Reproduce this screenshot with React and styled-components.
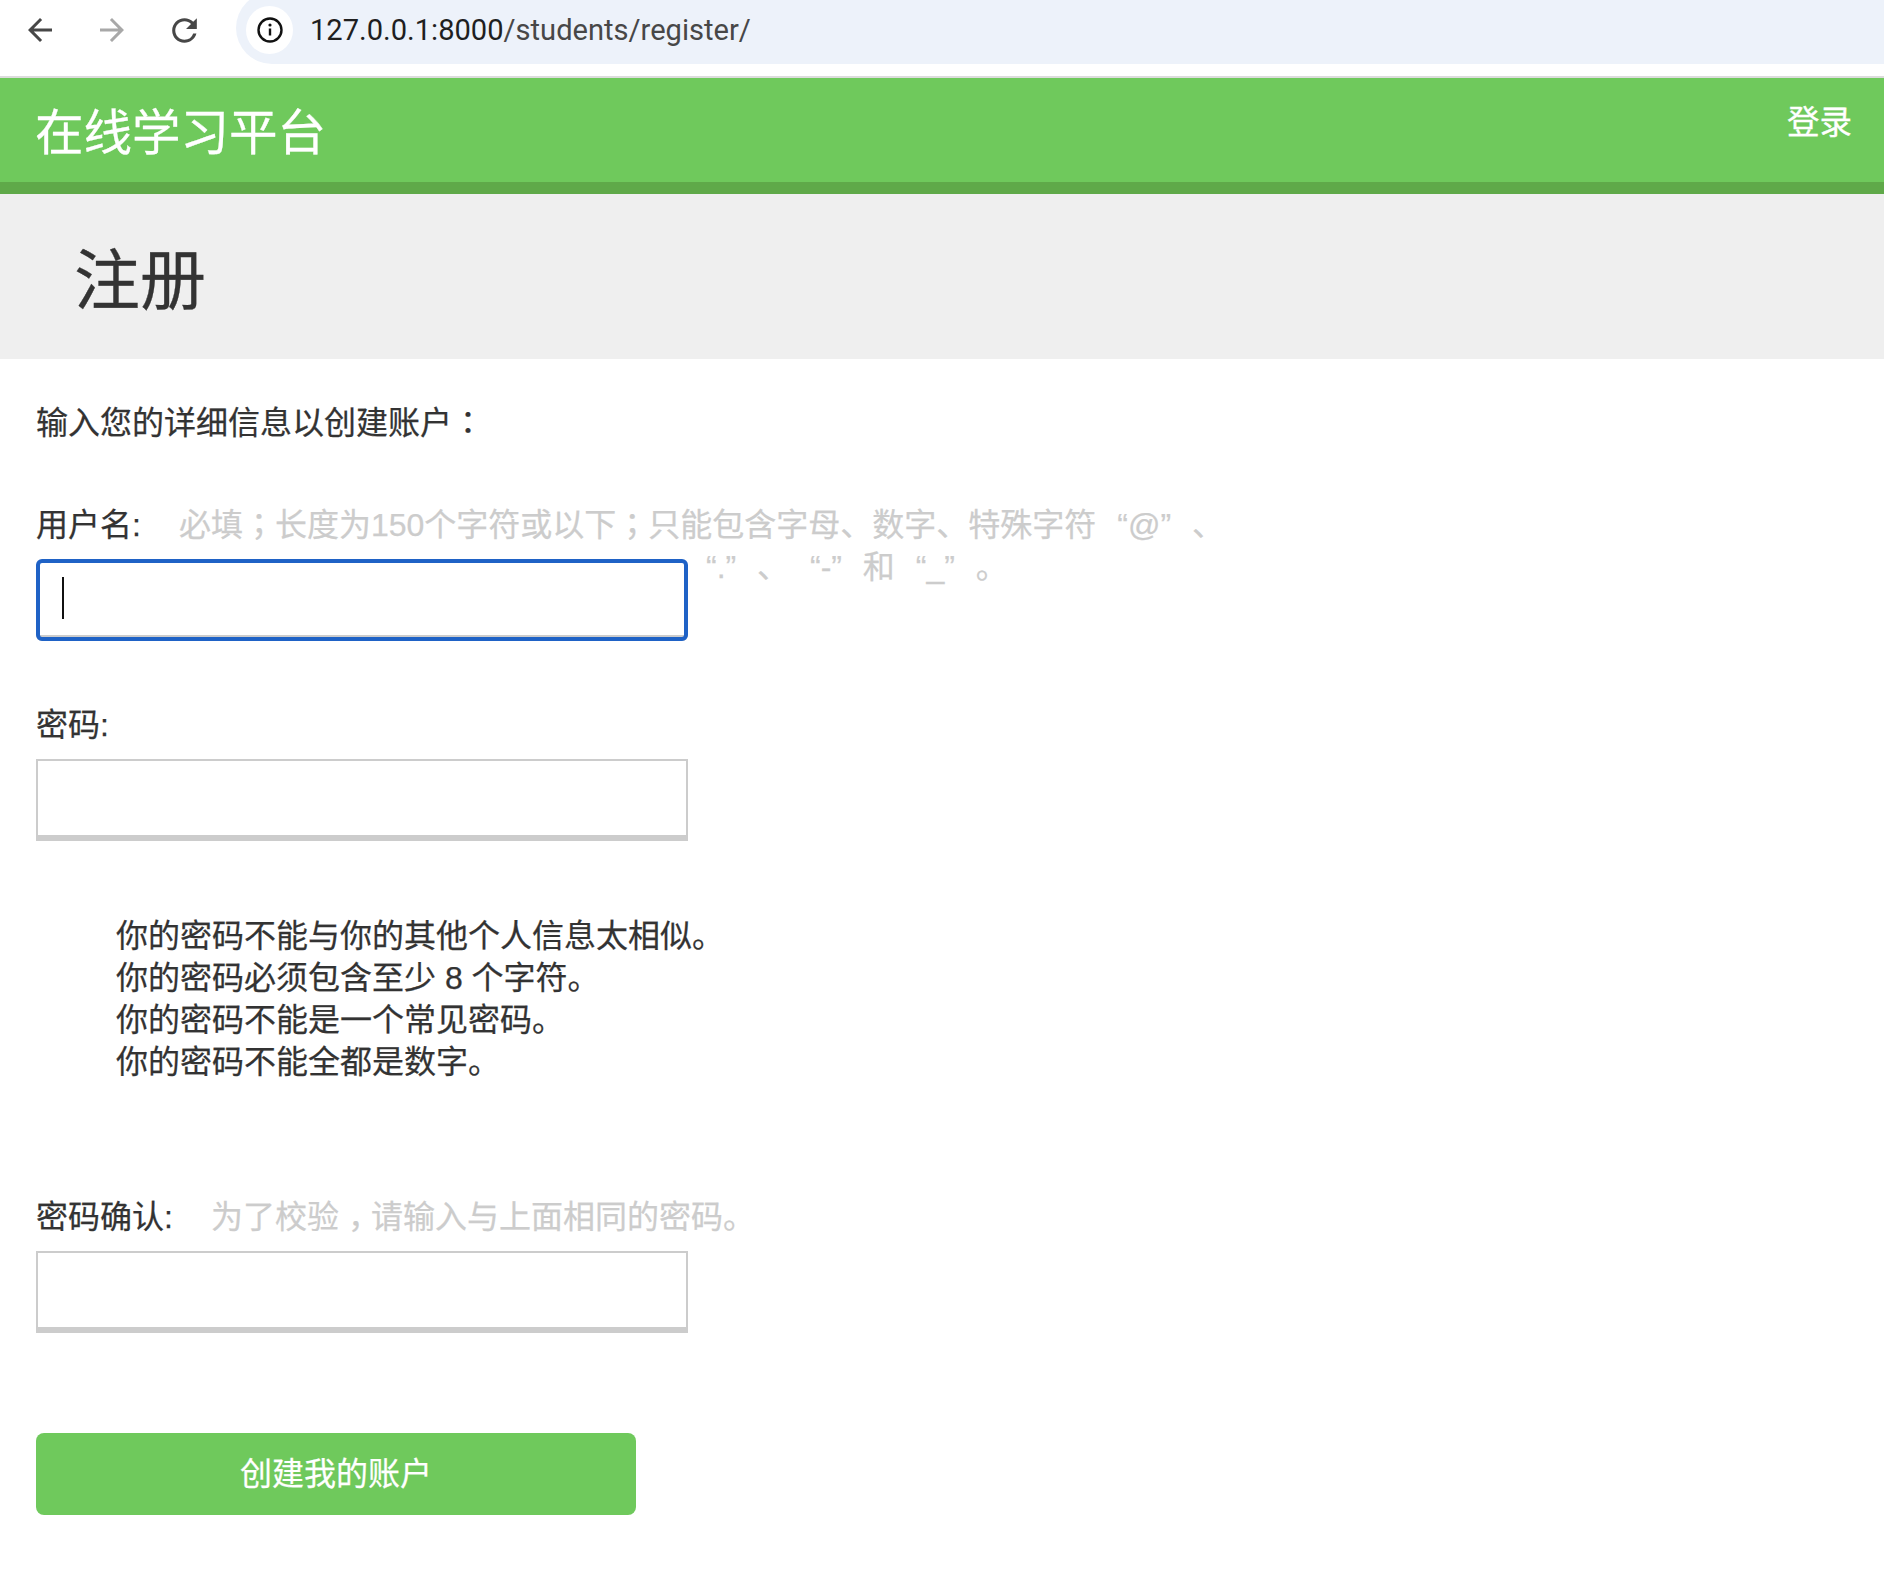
import React from "react";
import styled, { createGlobalStyle } from "styled-components";
import { MdArrowBack, MdArrowForward, MdRefresh } from "react-icons/md";

const FONT = `"Liberation Sans", "Noto Sans CJK SC", sans-serif`;

const GlobalStyle = createGlobalStyle`
  html, body {
    margin: 0;
    padding: 0;
    background: #fff;
    color: #333;
    font-family: ${FONT};
  }
`;

/* Browser chrome */

const BrowserBar = styled.div`
  height: 76px;
  display: flex;
  align-items: flex-start;
  overflow: hidden;
  background: #fff;
  border-bottom: 2px solid #dcdcdc;
`;

const NavButtons = styled.div`
  width: 236px;
  flex: none;
  height: 60px;
  padding-left: 22px;
  box-sizing: border-box;
  display: flex;
  align-items: center;
  gap: 36px;
  color: #474747;
`;

const NavSlot = styled.span`
  display: flex;
  color: ${(p) => (p.$disabled ? "#a8a8a8" : "inherit")};
`;

const AddressBar = styled.div`
  flex: 1;
  height: 72px;
  margin-top: -8px;
  border-radius: 36px 0 0 36px;
  background: #edf2fa;
  display: flex;
  align-items: center;
  padding-left: 10px;
  gap: 17px;
`;

const InfoChip = styled.div`
  width: 47px;
  height: 48px;
  margin-top: 4px;
  border-radius: 50%;
  background: #fff;
  display: flex;
  align-items: center;
  justify-content: center;
`;

const Url = styled.div`
  margin-top: 4px;
  font-family: Roboto, "Liberation Sans", sans-serif;
  font-size: 29.1px;
  color: #474747;
  b {
    font-weight: 400;
    color: #1f1f1f;
  }
`;

/* Site header */

const Header = styled.header`
  height: 104px;
  background: #6fc95c;
  border-bottom: 12px solid #5fa949;
  display: flex;
  justify-content: space-between;
  padding: 0 32px 0 35px;
`;

const Logo = styled.div`
  font-size: 48.5px;
  line-height: 64px;
  margin-top: 23px;
  color: #fff;
  -webkit-text-stroke: 0.3px #fff;
`;

const LoginLink = styled.a`
  font-size: 32.5px;
  line-height: 44px;
  margin-top: 23px;
  color: #fff;
  -webkit-text-stroke: 0.3px #fff;
`;

const TitleBand = styled.div`
  height: 165px;
  background: #efefef;
  padding-left: 74px;
  font-size: 66px;
  line-height: 175px;
  color: #333;
  -webkit-text-stroke: 0.3px #333;
`;

/* Form */

const Content = styled.main`
  padding: 0 36px 77px;
  font-size: 32px;
  line-height: 42px;
  -webkit-text-stroke: 0.25px currentColor;
`;

const Intro = styled.p`
  margin: 0;
  padding-top: 43px;
`;

const Label = styled.label`
  flex: none;
`;

const FieldHead = styled.div`
  display: flex;
  gap: 38px;
  margin-top: ${(p) => p.$top}px;
`;

const Help = styled.span`
  color: #ccc;
  white-space: pre;
  word-spacing: 12px;
`;

// ； ： sit mid-cell in the reference, the TC face draws them that way
const Mid = styled.span`
  font-family: "Noto Sans CJK TC", sans-serif;
  line-height: 0;
`;

// the comma keeps its low SC shape but is centred in its cell
const Comma = styled.span`
  margin-left: 9px;
  letter-spacing: -9px;
`;

const FieldRow = styled.div`
  display: flex;
  align-items: flex-start;
  gap: 18px;
`;

const Input = styled.div`
  width: 652px;
  height: 82px;
  box-sizing: border-box;
  margin-top: ${(p) => p.$top || 0}px;
  background: #fff;
  border: 2px solid #ccc;
  border-bottom-width: 6px;
  ${(p) =>
    p.$focused &&
    `
    border: 0;
    outline: 4px solid #1f62c6;
    outline-offset: -4px;
    border-radius: 6px;
    border-bottom: 6px solid #ccc;
    padding: 18px 0 0 26px;
  `}
`;

const Caret = styled.div`
  width: 2px;
  height: 42px;
  background: #111;
`;

const Rules = styled.ul`
  list-style: none;
  margin: 74px 0 0;
  padding: 0 0 0 80px;
`;

const Submit = styled.button`
  display: block;
  width: 600px;
  height: 82px;
  margin-top: 100px;
  padding: 0;
  border: 0;
  border-radius: 8px;
  background: #6fc95c;
  color: #fff;
  font: inherit;
  -webkit-text-stroke: inherit;
`;

export default function App() {
  return (
    <>
      <GlobalStyle />
      <BrowserBar>
        <NavButtons>
          <NavSlot>
            <MdArrowBack size={36} />
          </NavSlot>
          <NavSlot $disabled>
            <MdArrowForward size={36} />
          </NavSlot>
          <NavSlot>
            <MdRefresh size={37} />
          </NavSlot>
        </NavButtons>
        <AddressBar>
          <InfoChip>
            <svg width="26" height="26" viewBox="0 0 26 26" fill="none">
              <circle cx="13" cy="13" r="11.5" stroke="#111" strokeWidth="2.4" />
              <path d="M13 11.5v7" stroke="#111" strokeWidth="2.4" />
              <circle cx="13" cy="8" r="1.6" fill="#111" />
            </svg>
          </InfoChip>
          <Url>
            <b>127.0.0.1:8000</b>/students/register/
          </Url>
        </AddressBar>
      </BrowserBar>

      <Header>
        <Logo>在线学习平台</Logo>
        <LoginLink>登录</LoginLink>
      </Header>
      <TitleBand>注册</TitleBand>

      <Content>
        <Intro>
          输入您的详细信息以创建账户<Mid>：</Mid>
        </Intro>

        <FieldHead $top={60}>
          <Label>用户名:</Label>
          <Help>
            必填<Mid>；</Mid>长度为150个字符或以下<Mid>；</Mid>只能包含字母、数字、特殊字符 “@” 、
          </Help>
        </FieldHead>
        <FieldRow>
          <Input $top={13} $focused>
            <Caret />
          </Input>
          <Help>“.” 、 “-” 和 “_” 。</Help>
        </FieldRow>

        <FieldHead $top={63}>
          <Label>密码:</Label>
        </FieldHead>
        <Input $top={13} />

        <Rules>
          <li>你的密码不能与你的其他个人信息太相似。</li>
          <li>你的密码必须包含至少 8 个字符。</li>
          <li>你的密码不能是一个常见密码。</li>
          <li>你的密码不能全都是数字。</li>
        </Rules>

        <FieldHead $top={113}>
          <Label>密码确认:</Label>
          <Help>
            为了校验<Comma>，</Comma>请输入与上面相同的密码。
          </Help>
        </FieldHead>
        <Input $top={13} />

        <Submit>创建我的账户</Submit>
      </Content>
    </>
  );
}
